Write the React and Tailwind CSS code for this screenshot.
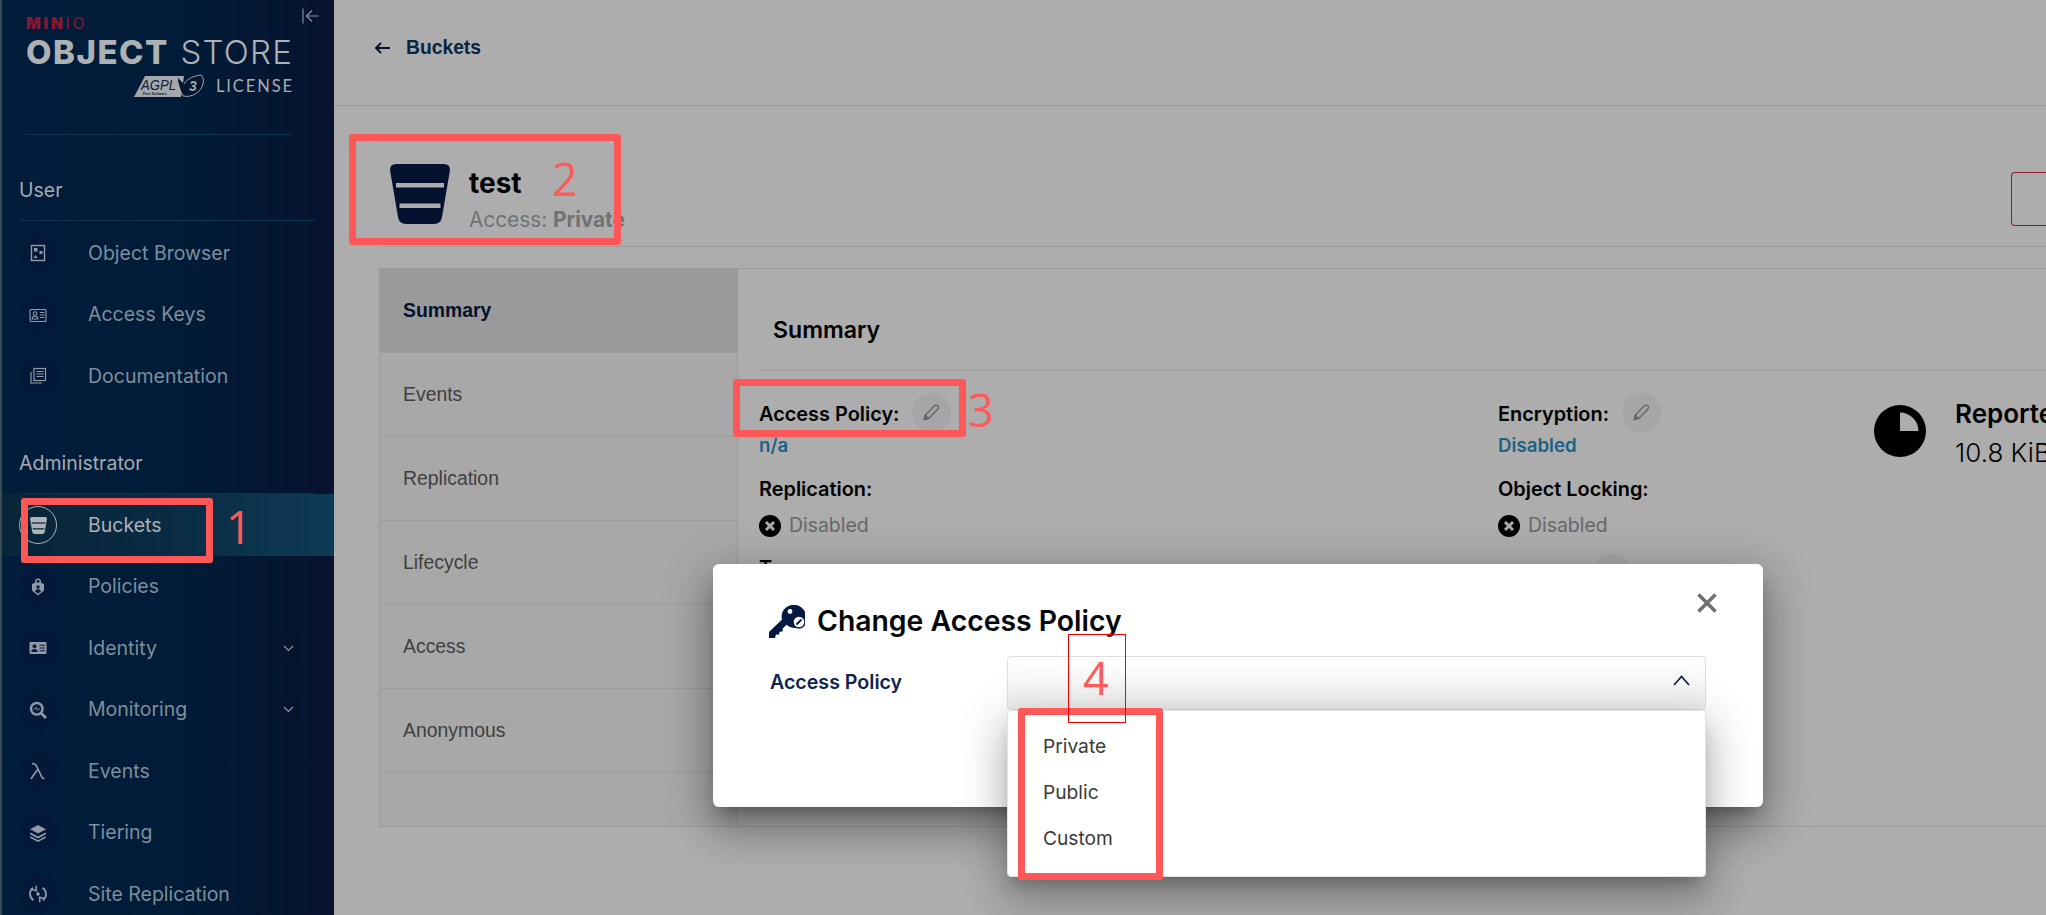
import React from "react";

const Ic = ({ children, size = 18, fill = "none", stroke = "currentColor", sw = 1.4 }) => (
  <svg width={size} height={size} viewBox="0 0 18 18" fill={fill} stroke={stroke} strokeWidth={sw}>
    {children}
  </svg>
);

const BucketGlyph = ({ size, body, line }) => (
  <svg width={size} height={size} viewBox="0 0 60 60">
    <path d="M6 0H54Q60 0 60 6L52 53Q51 60 44 60H16Q9 60 8 53L0 6Q0 0 6 0Z" fill={body} />
    <rect x="6" y="19" width="48" height="4.5" fill={line} />
    <rect x="9.5" y="39.5" width="41" height="4.5" fill={line} />
  </svg>
);

const icons = {
  browser: (
    <Ic>
      <rect x="2.5" y="1.5" width="13" height="15" />
      <rect x="5" y="4" width="3.5" height="3.5" fill="currentColor" stroke="none" />
      <rect x="10.5" y="7" width="3" height="3" fill="currentColor" stroke="none" />
      <path d="M4.5 14l2-3 2 3z" fill="currentColor" stroke="none" />
    </Ic>
  ),
  keys: (
    <Ic sw={1.1}>
      <rect x="1" y="3.5" width="16" height="12" rx="1" />
      <circle cx="6" cy="7.5" r="1.8" />
      <path d="M3 13c0-2 1.5-2.8 3-2.8s3 .8 3 2.8z" />
      <path d="M11 6.5h4.5M11 9h4.5M11 11.5h4.5" />
    </Ic>
  ),
  docs: (
    <Ic sw={1.2}>
      <rect x="5" y="1.5" width="11.5" height="12" />
      <path d="M7.5 4.5h7M7.5 7h7M7.5 9.5h7" />
      <path d="M2 5v11h11" />
    </Ic>
  ),
  policies: (
    <svg width="18" height="18" viewBox="0 0 18 18" fill="currentColor">
      <path d="M9 .5c-1.8 0-3 1.3-3 3v1.2L3 6v6.5L9 17.5l6-5V6L12 4.7V3.5c0-1.7-1.2-3-3-3zM7.4 3.6c0-1 .7-1.7 1.6-1.7s1.6.7 1.6 1.7v.9H7.4z" />
      <circle cx="9" cy="9" r="1.7" fill="#06203c" />
      <path d="M6 13.5c.4-1.6 1.6-2.2 3-2.2s2.6.6 3 2.2L9 15.5z" fill="#06203c" />
    </svg>
  ),
  identity: (
    <svg width="18" height="18" viewBox="0 0 18 18" fill="currentColor">
      <path d="M1.5 3h15a1 1 0 011 1v10a1 1 0 01-1 1h-15a1 1 0 01-1-1V4a1 1 0 011-1z" />
      <circle cx="5.5" cy="7.3" r="2" fill="#06203c" />
      <path d="M2.3 13c0-2.2 1.5-3 3.2-3s3.2.8 3.2 3z" fill="#06203c" />
      <path d="M10.5 6.3h5.5M10.5 9h5.5M10.5 11.7h5.5" stroke="#06203c" strokeWidth="1" />
    </svg>
  ),
  monitoring: (
    <svg width="18" height="18" viewBox="0 0 18 18" fill="none" stroke="currentColor">
      <circle cx="7.8" cy="7.8" r="5.8" strokeWidth="2.4" />
      <path d="M12 12l5 5" strokeWidth="2.6" />
      <path d="M4.5 8h1.6l1-2 1.3 3.6L9.4 8h1.6" strokeWidth="0.8" />
    </svg>
  ),
  events: (
    <svg width="18" height="18" viewBox="0 0 18 18" fill="none" stroke="currentColor" strokeWidth="1.6">
      <path d="M3 1.5c3 0 4 .8 5 3.5l5 10.5c.3.8 1 1 2.5 1M9 7L2 16.8" />
    </svg>
  ),
  tiering: (
    <svg width="18" height="18" viewBox="0 0 18 18" fill="currentColor">
      <path d="M9 1l8 4.3-8 4.3-8-4.3z" />
      <path d="M1.5 8.6L9 12.6l7.5-4 .5 1.6L9 14.5 1 10.2z" />
      <path d="M1.5 12.3L9 16.3l7.5-4 .5 1.4L9 18 1 13.7z" />
    </svg>
  ),
  replication: (
    <svg width="18" height="18" viewBox="0 0 18 18" fill="none" stroke="currentColor" strokeWidth="1.8">
      <path d="M4.5 15.2A7.6 7.6 0 014 2.8" />
      <path d="M7.2.8L7.4 5.8 2.6 4.6" strokeWidth="1.5" />
      <path d="M13.5 2.8A7.6 7.6 0 0114 15.2" />
      <path d="M10.8 17.2l-.2-5 4.8 1.2" strokeWidth="1.5" />
      <path d="M9 6.8l2.2 2.2L9 11.2 6.8 9z" fill="currentColor" stroke="none" />
    </svg>
  ),
};

const Chevron = () => (
  <span className="w-[21px] h-[21px] bg-[#06142e] rounded-[2px] flex items-center justify-center ml-auto mr-[35px]">
    <svg width="11" height="7" viewBox="0 0 11 7" fill="none" stroke="#8e99a5" strokeWidth="1.1">
      <path d="M1 1l4.5 4.5L10 1" />
    </svg>
  </span>
);

const NavRow = ({ icon, label, chevron }) => (
  <div className="h-[61.5px] flex items-center pl-[19px]">
    <span className="w-[38px] h-[38px] rounded-full bg-[#04193a] flex items-center justify-center text-[#909ba7] shrink-0">
      {icons[icon]}
    </span>
    <span className="ml-[31px] text-[19.5px] text-[#7f8e9c]">{label}</span>
    {chevron && <Chevron />}
  </div>
);

const SectionHead = ({ children, className }) => (
  <div className={`mx-[19px] h-[60px] flex items-center border-b border-[#0e3350] text-[19.5px] text-[#a7abb0] ${className}`}>
    {children}
  </div>
);

const Logo = () => (
  <div className="relative h-[135px] border-b border-[#0e3350] mx-[26px] w-[266px]">
    <div className="pt-[15px] h-[36px] leading-[18px] text-[#8b1733] text-[15.5px] tracking-[2.8px]" style={{ fontFamily: "Inter, sans-serif" }}>
      <span className="font-black">MIN</span>
      <span className="font-normal">IO</span>
    </div>
    <div className="flex justify-between leading-[34px] text-[33px] text-[#aeb1b4] h-[38px] -mt-[1px]" style={{ fontFamily: "Inter, sans-serif" }}>
      <span className="font-extrabold tracking-[1.5px]">OBJECT</span>
      <span className="font-light tracking-[1.2px] -mr-[1px]">STORE</span>
    </div>
    <div className="flex justify-end items-center h-[26px] gap-[12px]">
      <svg width="70" height="24" viewBox="0 0 70 24" className="shrink-0">
        <polygon points="0,23 11,2 50,2 47,23" fill="#a4a7ab" />
        <text x="7" y="15.5" fontFamily="Liberation Sans" fontStyle="italic" fontSize="15" textLength="35" lengthAdjust="spacingAndGlyphs" fill="#0b1c36">AGPL</text>
        <text x="9" y="21" fontFamily="Liberation Sans" fontWeight="700" fontSize="3.6" fill="#0b1c36">Free Software</text>
        <path d="M43 3c1 7 3 14 6 19 9 2 18-4 20-12 1-4 0-7-2-9-7 1-13 3-17 9" fill="#04152f" stroke="#a4a7ab" strokeWidth="1" />
        <text x="55" y="17" fontFamily="Liberation Sans" fontStyle="italic" fontWeight="700" fontSize="14" fill="#a4a7ab">3</text>
      </svg>
      <span className="text-[16.5px] tracking-[1.9px] font-normal text-[#a9adb2] mr-[-2px]" style={{ fontFamily: "Lato, sans-serif" }}>
        LICENSE
      </span>
    </div>
    <svg width="17" height="16" viewBox="0 0 17 16" fill="none" stroke="#8e98a2" strokeWidth="1.1" className="absolute left-[276px] top-[8px]">
      <path d="M1 0.5v15M16.5 8H4.5M10 2.5L4.5 8l5.5 5.5" />
    </svg>
  </div>
);

const Sidebar = () => (
  <aside className="w-[334px] shrink-0 h-[915px] overflow-hidden border-l-2 border-[#3a4a55] bg-[linear-gradient(90deg,#001d3b,#001c38_50%,#07132f)] text-left" style={{ fontFamily: "Inter, sans-serif" }}>
    <div className="-ml-[2px]">
      <Logo />
      <SectionHead className="mt-[26px]">User</SectionHead>
      <div className="pt-[1.5px]">
        <NavRow icon="browser" label="Object Browser" />
        <NavRow icon="keys" label="Access Keys" />
        <NavRow icon="docs" label="Documentation" />
      </div>
      <SectionHead className="mt-[27px]">Administrator</SectionHead>
      <div className="h-[62px] flex items-center pl-[19px] bg-[linear-gradient(90deg,#082539,#0a2b44_50%,#0e3b55)] ml-[2px] -mr-[2px]">
        <span className="w-[38px] h-[38px] rounded-full border border-[#a9adb1] flex items-center justify-center -ml-[2px] shrink-0">
          <BucketGlyph size={17} body="#b0b3b6" line="#0a2b44" />
        </span>
        <span className="ml-[31px] text-[19.5px] text-[#aeb2b6] pt-[2px]">Buckets</span>
      </div>
      <NavRow icon="policies" label="Policies" />
      <NavRow icon="identity" label="Identity" chevron />
      <NavRow icon="monitoring" label="Monitoring" chevron />
      <NavRow icon="events" label="Events" />
      <NavRow icon="tiering" label="Tiering" />
      <NavRow icon="replication" label="Site Replication" />
    </div>
  </aside>
);

const Pencil = ({ className }) => (
  <span className={`w-[39px] h-[39px] rounded-full bg-[#a6a6a6] inline-flex items-center justify-center shrink-0 ${className}`}>
    <svg width="19" height="20" viewBox="0 0 18 18" fill="none" stroke="#5f5f5f" strokeWidth="1.2">
      <path d="M2.2 16l.9-4.2L11.9 3a2 2 0 012.9 0l.3.3a2 2 0 010 2.9L6.3 15z" />
      <path d="M3.1 11.8L6.3 15" />
      <path d="M2.2 16l2-.5-1.5-1.5z" fill="#5f5f5f" />
    </svg>
  </span>
);

const Disabled = () => (
  <div className="flex items-center gap-[8px] h-[24px] mt-[10px]">
    <svg width="22" height="22" viewBox="0 0 22 22">
      <circle cx="11" cy="11" r="11" fill="#000" />
      <path d="M7 7l8 8M15 7l-8 8" stroke="#adadad" strokeWidth="3" />
    </svg>
    <span className="text-[19.4px] text-[#66686b]">Disabled</span>
  </div>
);

const Label = ({ children, className = "" }) => (
  <div className={`h-[30px] leading-[30px] text-[19.9px] font-semibold text-black whitespace-nowrap ${className}`}>{children}</div>
);

const tabs = ["Events", "Replication", "Lifecycle", "Access", "Anonymous"];

const TabsColumn = () => (
  <nav className="w-[358px] shrink-0 border-r border-[#9b9b9b] bg-[#a8a8a8] flex flex-col text-[19.4px] text-[#3f3f3f]" style={{ fontFamily: '"Liberation Sans", sans-serif' }}>
    <div className="h-[84px] bg-[#9a9a9a] flex items-center pl-[23px] font-bold text-[#04122e]">Summary</div>
    {tabs.map((t) => (
      <div key={t} className="h-[84px] flex items-center pl-[23px] border-b border-[#9c9c9c]">
        {t}
      </div>
    ))}
  </nav>
);

const SummaryPanel = () => (
  <section className="flex-1 min-w-0 pl-[21px]" style={{ fontFamily: "Inter, sans-serif" }}>
    <div className="h-[102px] border-b border-[#9c9c9c] pt-[44px] pl-[14px] text-[23.1px] leading-[34px] font-semibold text-black">Summary</div>
    <div className="flex pt-[28px]">
      <div className="w-[739px] shrink-0">
        <div className="flex items-center h-[30px]">
          <Label>Access Policy:</Label>
          <Pencil className="ml-[13px] -mt-[4px]" />
        </div>
        <div className="h-[24px] mt-[5px] leading-[24px] text-[18.7px] font-semibold text-[#1d6184]">n/a</div>
        <Label className="mt-[16px]">Replication:</Label>
        <Disabled />
        <Label className="mt-[15px]">Tags:</Label>
      </div>
      <div className="w-[376px] shrink-0">
        <div className="flex items-center h-[30px]">
          <Label>Encryption:</Label>
          <Pencil className="ml-[13px] -mt-[4px]" />
        </div>
        <div className="h-[24px] mt-[5px] leading-[24px] text-[18.7px] font-semibold text-[#1d6184]">Disabled</div>
        <Label className="mt-[16px]">Object Locking:</Label>
        <Disabled />
        <div className="flex items-center h-[30px] mt-[20px]">
          <Label>Quota:</Label>
          <Pencil className="ml-[30px]" />
        </div>
      </div>
      <div className="flex gap-[29px] items-start h-[64px] -mt-[2px] whitespace-nowrap">
        <svg width="52" height="52" viewBox="0 0 52 52" className="shrink-0 mt-[8px]">
          <circle cx="26" cy="26" r="26" fill="#000" />
          <path d="M26 7.5A18.5 18.5 0 0144.5 26H26z" fill="#adadad" />
        </svg>
        <div className="text-[26px] leading-[39px] text-black -mt-[3px]">
          <div className="font-semibold">Reported Usage:</div>
          <div className="font-light">10.8 KiB</div>
        </div>
      </div>
    </div>
  </section>
);

const Main = () => (
  <main className="flex-1 min-w-0 h-[915px] bg-[#adadad] overflow-hidden">
    <div className="h-[106px] border-b border-[#9c9c9c] flex items-center pl-[40px] pb-[9px] gap-[16px]">
      <svg width="16" height="12" viewBox="0 0 16 12" fill="none" stroke="#04122e" strokeWidth="2">
        <path d="M16 6H2M7 1L2 6l5 5" />
      </svg>
      <span className="text-[19.3px] font-bold text-[#072544]" style={{ fontFamily: '"Liberation Sans", sans-serif' }}>Buckets</span>
    </div>
    <div className="ml-[45px] h-[141px] border-b border-[#9c9c9c] flex items-start pl-[11px] pt-[58px]" style={{ fontFamily: "Inter, sans-serif" }}>
      <BucketGlyph size={60} body="#04112f" line="#adadad" />
      <div className="ml-[19px] -mt-[1px]">
        <div className="text-[28px] leading-[40px] font-bold text-black">test</div>
        <div className="text-[20.8px] leading-[32px] text-[#707275] mt-[1px] whitespace-nowrap">
          Access: <span className="font-bold">Private</span>
        </div>
      </div>
      <div className="ml-auto w-[35px] h-[54px] mt-[8px] border border-r-0 border-[#8c1a33] rounded-l-[4px]" />
    </div>
    <div className="ml-[45px] mt-[21px] h-[559px] flex border-t border-b border-l border-[#9c9c9c]">
      <TabsColumn />
      <SummaryPanel />
    </div>
  </main>
);

const Modal = () => (
  <div className="absolute left-[713px] top-[564px] w-[1050px] h-[243px] bg-white rounded-[6px] shadow-[0_11px_15px_-7px_rgba(0,0,0,0.3),0_24px_38px_3px_rgba(0,0,0,0.2),0_9px_46px_8px_rgba(0,0,0,0.18)] pl-[56px] pr-[57px] pt-[41px]" style={{ fontFamily: "Inter, sans-serif" }}>
    <div className="flex items-center h-[33px]">
      <svg width="36" height="33" viewBox="0 0 36 33" className="shrink-0">
        <path d="M24 0a11.5 11.5 0 00-11 14.5L0 27v6h6l1-3.5 3 .3.5-3 3-.3.3-3 3.7-3.7A11.5 11.5 0 1024 0z" fill="#05183f" />
        <circle cx="21" cy="6.5" r="2.4" fill="#fff" />
        <circle cx="30" cy="17" r="6" fill="#fff" stroke="#05183f" strokeWidth="1.4" />
        <path d="M27.5 19.5l5-5" stroke="#05183f" strokeWidth="2" />
      </svg>
      <span className="ml-[12px] text-[28.35px] font-semibold text-[#04060c] whitespace-nowrap">Change Access Policy</span>
      <svg width="20" height="20" viewBox="0 0 20 20" fill="none" stroke="#707070" strokeWidth="3.6" className="absolute left-[984px] top-[29px]">
        <path d="M1.5 1.5l17 17M18.5 1.5l-17 17" />
      </svg>
    </div>
    <div className="flex items-center mt-[18px]">
      <span className="w-[238px] shrink-0 pl-[1px] text-[19.6px] font-semibold text-[#0d2350]">Access Policy</span>
      <div className="relative flex-1 h-[54px] rounded-[4px] border border-[#dedede] bg-[linear-gradient(180deg,#ffffff,#eeeeee)]">
        <svg width="17" height="11" viewBox="0 0 17 11" fill="none" stroke="#05183f" strokeWidth="1.6" className="absolute right-[15px] top-[18px]">
          <path d="M1 10l7.5-8.5L16 10" />
        </svg>
        <div className="absolute -left-[1px] -right-[1px] top-[53px] h-[167px] bg-white rounded-[4px] border border-[#e4e4e4] shadow-[0_11px_15px_-7px_rgba(0,0,0,0.25),0_24px_38px_3px_rgba(0,0,0,0.16),0_9px_46px_8px_rgba(0,0,0,0.14)] pl-[35px] pt-[12px] text-[19.2px] text-[#3a3a3a]">
          <div className="h-[46px] leading-[46px]">Private</div>
          <div className="h-[46px] leading-[46px]">Public</div>
          <div className="h-[47px] leading-[47px]">Custom</div>
        </div>
      </div>
    </div>
  </div>
);

const Box = ({ className }) => <div className={`absolute border-[7px] border-[#fd5757] rounded-[3px] ${className}`} />;
const Num = ({ className, children }) => (
  <span className={`absolute text-[45px] leading-[50px] font-normal text-[#fd5a5a] ${className}`} style={{ fontFamily: '"Open Sans", sans-serif' }}>
    {children}
  </span>
);

export default function App() {
  return (
    <div className="relative w-[2046px] h-[915px] overflow-hidden flex">
      <Sidebar />
      <Main />
      <Modal />
      <Box className="left-[21px] top-[498px] w-[192px] h-[65px]" />
      <Box className="left-[349px] top-[134px] w-[272px] h-[111px]" />
      <Box className="left-[733px] top-[379px] w-[233px] h-[58px]" />
      <Box className="left-[1018px] top-[708px] w-[145px] h-[172px]" />
      <div className="absolute left-[1068px] top-[634px] w-[58px] h-[89px] border border-[#f00000]" />
      <Num className="left-[226px] top-[502px]">1</Num>
      <Num className="left-[552px] top-[154px]">2</Num>
      <Num className="left-[968px] top-[385px]">3</Num>
      <Num className="left-[1083px] top-[653px]">4</Num>
    </div>
  );
}
